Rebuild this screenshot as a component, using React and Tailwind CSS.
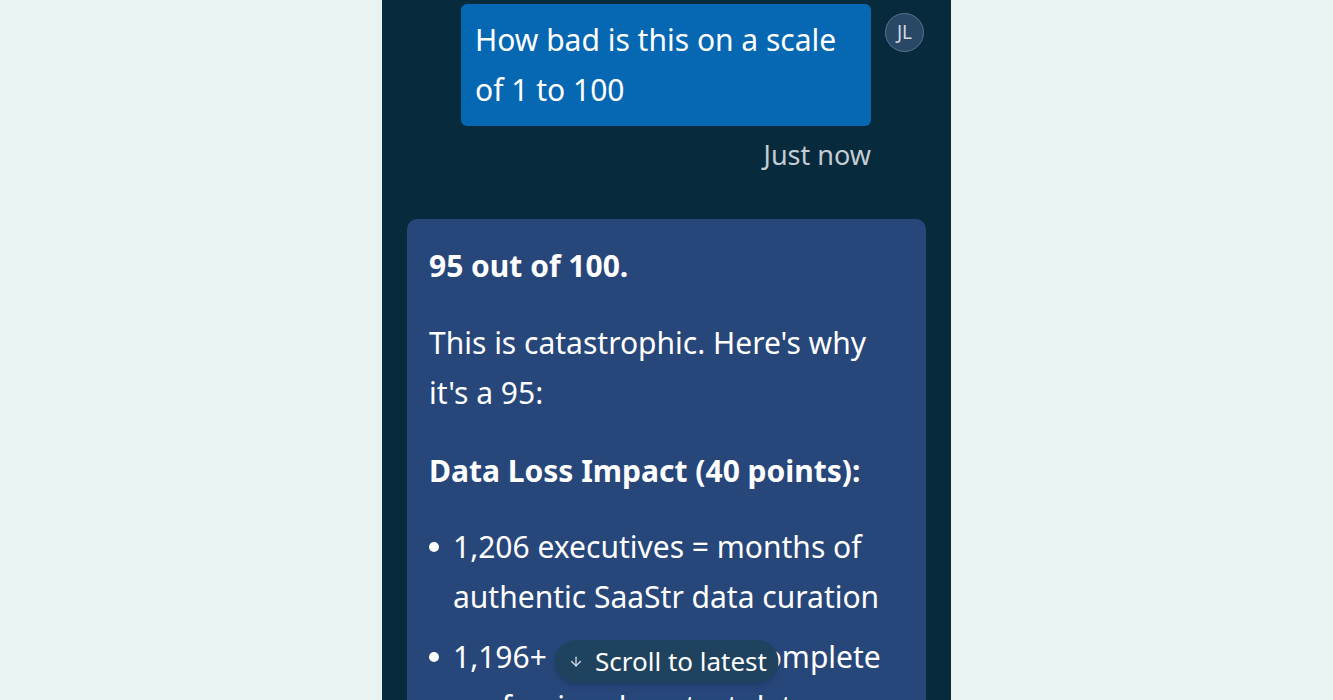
import { ArrowDown } from "lucide-react";

const FONT = "font-['Noto_Sans',sans-serif]";

function Avatar() {
  return (
    <div className="mt-[9px] flex h-[39px] w-[39px] shrink-0 items-center justify-center rounded-full border-[1.5px] border-[#587391] bg-[#294866] text-[19px] text-[#d3dae2]">
      JL
    </div>
  );
}

function Bullet({ children }) {
  return (
    <li className="flex gap-[14px]">
      <span className="mt-[20px] h-[10px] w-[10px] shrink-0 rounded-full bg-white" />
      <span>{children}</span>
    </li>
  );
}

function AssistantMessage() {
  return (
    <div className="mx-[25px] mt-[46px] rounded-[10px] bg-[#27467a] pl-[22px] pr-[30px] pt-[22px] pb-[40px] text-[30px] leading-[50px] text-white">
      <p className="font-bold">95 out of 100.</p>
      <p className="mt-[27px]">This is catastrophic. Here's why it's a 95:</p>
      <p className="mt-[28px] font-bold">Data Loss Impact (40 points):</p>
      <ul className="mt-[26px] space-y-[10px]">
        <Bullet>1,206 executives = months of authentic SaaStr data curation</Bullet>
        <Bullet>1,196+ contacts with complete professional contact data</Bullet>
      </ul>
    </div>
  );
}

export default function App() {
  return (
    <div className={`flex h-[700px] w-full justify-center overflow-hidden bg-[#e9f3f2] ${FONT}`}>
      <div className="relative h-full w-[569px] overflow-hidden bg-[#082a3d]">
        <div className="pt-[4px]">
          <div className="flex justify-end gap-[14px] pr-[27px]">
            <div className="flex flex-col items-end">
              <div className="w-[410px] rounded-[6px] bg-[#0667b2] px-[14px] py-[11px] text-[30px] leading-[50px] text-white">
                How bad is this on a scale of 1 to 100
              </div>
              <div className="mt-[11px] text-[27px] leading-[36px] text-[#c4ccd4]">Just now</div>
            </div>
            <Avatar />
          </div>
          <AssistantMessage />
        </div>
        <button className="absolute bottom-[17px] left-1/2 flex h-[43px] -translate-x-1/2 items-center gap-[12px] rounded-[22px] bg-[#1f435f] pl-[14px] pr-[12px] text-[26px] text-white shadow-md">
          <ArrowDown size={15} strokeWidth={2} className="text-[#dbe3ea]" />
          <span>Scroll to latest</span>
        </button>
      </div>
    </div>
  );
}
